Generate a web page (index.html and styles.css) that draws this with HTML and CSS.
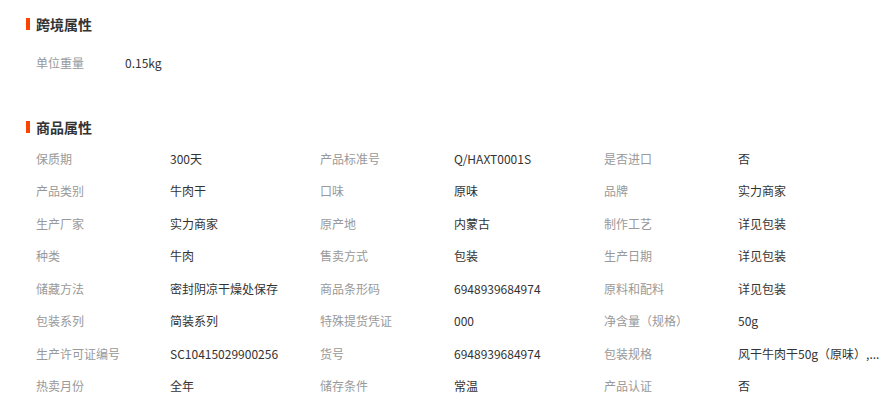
FILE: index.html
```html
<!DOCTYPE html>
<html lang="zh-CN">
<head>
  <meta charset="UTF-8">
  <meta name="viewport" content="width=device-width, initial-scale=1.0">
  <title>商品属性</title>
  <link rel="stylesheet" href="styles.css">
</head>
<body>
  <div class="section">
    <h2 class="section-title"><span class="bar"></span>跨境属性</h2>
    <div class="cross-row">
      <span class="label cross-label">单位重量</span>
      <span class="value">0.15kg</span>
    </div>
  </div>

  <div class="section goods">
    <h2 class="section-title"><span class="bar"></span>商品属性</h2>
    <div class="attr-grid">
      <span class="label">保质期</span><span class="value">300天</span>
      <span class="label">产品标准号</span><span class="value">Q/HAXT0001S</span>
      <span class="label">是否进口</span><span class="value">否</span>

      <span class="label">产品类别</span><span class="value">牛肉干</span>
      <span class="label">口味</span><span class="value">原味</span>
      <span class="label">品牌</span><span class="value">实力商家</span>

      <span class="label">生产厂家</span><span class="value">实力商家</span>
      <span class="label">原产地</span><span class="value">内蒙古</span>
      <span class="label">制作工艺</span><span class="value">详见包装</span>

      <span class="label">种类</span><span class="value">牛肉</span>
      <span class="label">售卖方式</span><span class="value">包装</span>
      <span class="label">生产日期</span><span class="value">详见包装</span>

      <span class="label">储藏方法</span><span class="value">密封阴凉干燥处保存</span>
      <span class="label">商品条形码</span><span class="value">6948939684974</span>
      <span class="label">原料和配料</span><span class="value">详见包装</span>

      <span class="label">包装系列</span><span class="value">简装系列</span>
      <span class="label">特殊提货凭证</span><span class="value">000</span>
      <span class="label">净含量（规格）</span><span class="value">50g</span>

      <span class="label">生产许可证编号</span><span class="value">SC10415029900256</span>
      <span class="label">货号</span><span class="value">6948939684974</span>
      <span class="label">包装规格</span><span class="value">风干牛肉干50g（原味）,...</span>

      <span class="label">热卖月份</span><span class="value">全年</span>
      <span class="label">储存条件</span><span class="value">常温</span>
      <span class="label">产品认证</span><span class="value">否</span>
    </div>
  </div>
</body>
</html>
```

FILE: styles.css
```css
body {
  margin: 0;
  padding-top: 14px;
  font-family: "Microsoft YaHei", "Noto Sans CJK SC", sans-serif;
  font-size: 12px;
  color: #333;
  background: #fff;
}
.section {
  padding-left: 26px;
}
.goods {
  margin-top: 39px;
}
.section-title {
  display: flex;
  align-items: center;
  gap: 6px;
  margin: 0;
  height: 20px;
  line-height: 20px;
  font-size: 14px;
  font-weight: bold;
  color: #333;
}
.bar {
  width: 4px;
  height: 12px;
  background-color: #ff4400;
}
.cross-row {
  display: flex;
  align-items: center;
  height: 32px;
  margin-top: 12px;
  padding-left: 10px;
}
.label {
  color: #999;
  white-space: nowrap;
}
.cross-label {
  width: 89px;
}
.value {
  color: #333;
  white-space: nowrap;
}
.attr-grid {
  display: grid;
  grid-template-columns: 134px 150px 134px 150px 134px 150px;
  grid-auto-rows: 32.5px;
  align-items: center;
  margin-top: 5px;
  padding-left: 10px;
}
```
